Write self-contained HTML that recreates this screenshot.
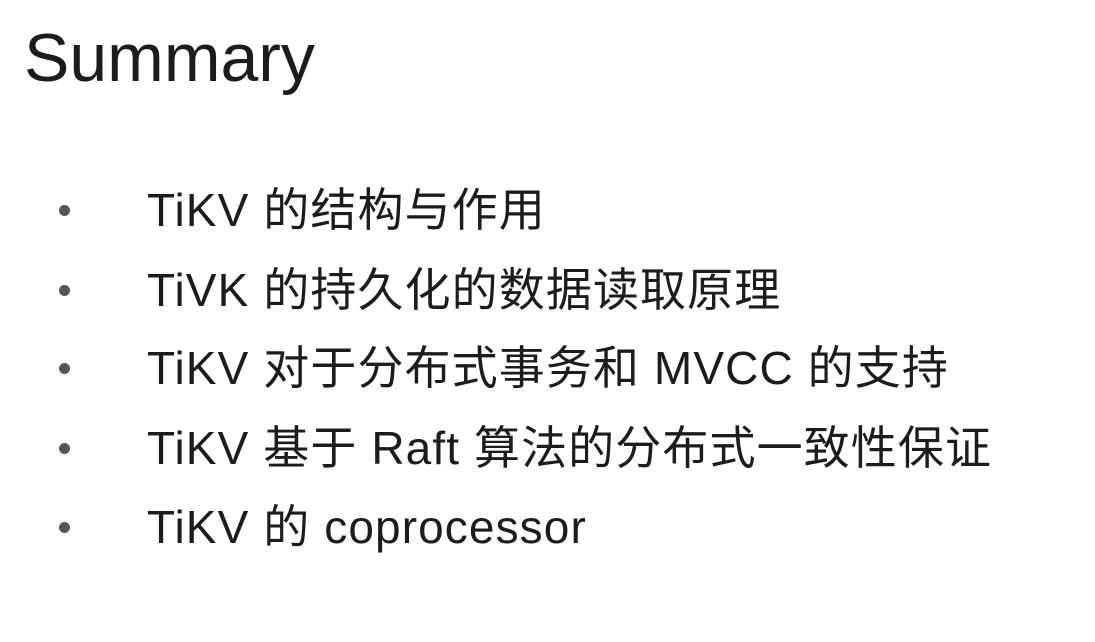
<!DOCTYPE html>
<html><head><meta charset="utf-8"><style>
html,body{margin:0;padding:0;background:#fff;width:1095px;height:642px;overflow:hidden}
body{font-family:"Liberation Sans","Noto Sans CJK SC",sans-serif;color:#1c1c1c;position:relative}
h1{position:absolute;left:24px;top:18px;margin:0;font-weight:normal;font-size:68px;line-height:80px}
.li{position:absolute;left:147px;font-size:46px;line-height:60px;white-space:nowrap;letter-spacing:1.1px}
.b{position:absolute;left:59px;width:11px;height:11px;border-radius:50%;background:#555}
</style></head><body>
<h1>Summary</h1>
<div class="b" style="top:205px"></div><div class="li" style="top:180px">TiKV 的结构与作用</div>
<div class="b" style="top:285px"></div><div class="li" style="top:260px">TiVK 的持久化的数据读取原理</div>
<div class="b" style="top:363px"></div><div class="li" style="top:338px">TiKV 对于分布式事务和 MVCC 的支持</div>
<div class="b" style="top:443px"></div><div class="li" style="top:418px">TiKV 基于 Raft 算法的分布式一致性保证</div>
<div class="b" style="top:522px"></div><div class="li" style="top:497px">TiKV 的 coprocessor</div>
</body></html>
